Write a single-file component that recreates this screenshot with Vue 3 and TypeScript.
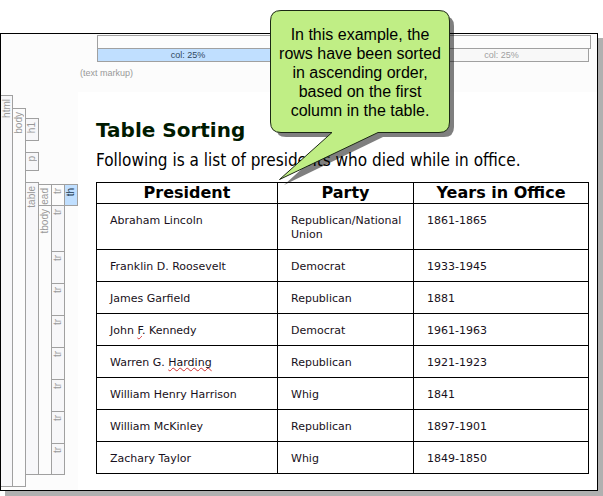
<script setup lang="ts">
interface President {
  before: string
  flagged?: string
  after?: string
  party: string
  years: string
}

const presidents: President[] = [
  { before: 'Abraham Lincoln', party: 'Republican/National Union', years: '1861-1865' },
  { before: 'Franklin D. Roosevelt', party: 'Democrat', years: '1933-1945' },
  { before: 'James Garfield', party: 'Republican', years: '1881' },
  { before: 'John ', flagged: 'F', after: '. Kennedy', party: 'Democrat', years: '1961-1963' },
  { before: 'Warren G. ', flagged: 'Harding', party: 'Republican', years: '1921-1923' },
  { before: 'William Henry Harrison', party: 'Whig', years: '1841' },
  { before: 'William McKinley', party: 'Republican', years: '1897-1901' },
  { before: 'Zachary Taylor', party: 'Whig', years: '1849-1850' },
]

const columns: string[] = ['President', 'Party', 'Years in Office']
</script>

<template>
  <div class="page">
    <main class="editor">
      <div class="ruler">
        <div class="ruler-table"></div>
        <div class="ruler-cols">
          <span class="ruler-col active">col: 25%</span>
          <span class="ruler-col"></span>
          <span class="ruler-col">col: 25%</span>
        </div>
      </div>
      <div class="markup-note">(text markup)</div>

      <div class="workspace">
        <div class="gutter">
          <div class="tag html-tag"><span class="label">html</span></div>
          <div class="tag body-tag"><span class="label">body</span></div>
          <div class="blocks">
            <div class="tag h1-tag"><span class="label">h1</span></div>
            <div class="tag p-tag"><span class="label">p</span></div>
            <div class="table-tags">
              <div class="tag table-tag"><span class="label">table</span></div>
              <div class="sections">
                <div class="section-row">
                  <div class="tag head"><span class="label">ead</span></div>
                  <div class="tag head"><span class="label">tr</span></div>
                  <div class="tag head selected"><span class="label">th</span></div>
                </div>
                <div class="section-row">
                  <div class="tag"><span class="label">tbody</span></div>
                  <div class="rows">
                    <div
                      v-for="(p, i) in presidents"
                      :key="p.years"
                      class="tag row-tag"
                      :class="{ tall: i === 0 }"
                    >
                      <span class="label">tr</span>
                    </div>
                  </div>
                </div>
              </div>
            </div>
          </div>
        </div>

        <article class="document">
          <h1>Table Sorting</h1>
          <p>Following is a list of presidents who died while in office.</p>
          <table>
            <colgroup>
              <col class="c-name" />
              <col class="c-party" />
              <col />
            </colgroup>
            <thead>
              <tr>
                <th v-for="c in columns" :key="c" scope="col">{{ c }}</th>
              </tr>
            </thead>
            <tbody>
              <tr v-for="p in presidents" :key="p.years">
                <td>{{ p.before }}<span v-if="p.flagged" class="misspelt">{{ p.flagged }}</span>{{ p.after }}</td>
                <td>{{ p.party }}</td>
                <td>{{ p.years }}</td>
              </tr>
            </tbody>
          </table>
        </article>
      </div>
    </main>

    <aside class="callout">
      <svg class="bubble" width="190" height="180" viewBox="0 0 190 180" aria-hidden="true">
        <path
          class="bubble-shadow"
          transform="translate(5 5)"
          d="M11 1H169Q179 1 179 11V112Q179 122 169 122H108L9 170L62 122H11Q1 122 1 112V11Q1 1 11 1Z"
        />
        <path
          class="bubble-face"
          d="M11 .5H169Q179.500 .5 179.500 11V112Q179.500 122.500 169 122.500H108L9.500 169.500L62 122.500H11Q.5 122.500 .5 112V11Q.5 .5 11 .5Z"
        />
      </svg>
      <p class="callout-text">
        In this example, the<br />rows have been sorted<br />in ascending order,<br />based on the first<br />column in the table.
      </p>
    </aside>
  </div>
</template>

<style>
body {
  margin: 0;
  background: #fff;
}
</style>

<style scoped>
.page {
  position: relative;
  padding: 33px 5px 5px 0;
  font-family: Verdana, "DejaVu Sans", sans-serif;
  color: #000;
}

.editor {
  border: 1px solid #000;
  background: #fcfcfc;
  box-shadow: 5px 5px 0 #b0b0b0;
}

.ruler {
  padding: 1px 6px 0 96px;
  font: 9px/12px "Liberation Sans", Arial, sans-serif;
  color: #a0a0a0;
}

.ruler-table {
  height: 12px;
  border: 1px solid #a0a0a0;
}

.ruler-cols {
  display: flex;
  margin-right: 2px;
  border-left: 1px solid #a0a0a0;
}

.ruler-col {
  box-sizing: border-box;
  flex: 1;
  height: 13px;
  border: 1px solid #a0a0a0;
  border-width: 0 1px 1px 0;
  background: #f8f8f8;
  text-align: center;
}

.ruler-col:nth-child(2) {
  flex: 0 0 136px;
}

.ruler-col.active {
  flex: 0 0 181px;
  background: #c0dfff;
  color: #304860;
}

.markup-note {
  padding: 5px 0 13px 79px;
  font: 9px/12px "Liberation Sans", Arial, sans-serif;
  color: #999;
}

.workspace {
  display: flex;
}

.gutter {
  display: flex;
  flex: 0 0 77px;
  padding: 3px 0;
  font: 10px/12px "Liberation Sans", Arial, sans-serif;
  color: #999;
}

.tag {
  box-sizing: border-box;
  width: 13px;
  flex: none;
  overflow: hidden;
  padding-top: 3px;
  border: 1px solid #a0a0a0;
  border-left: 0;
  background: #fcfcfc;
}

.label {
  display: block;
  width: 12px;
  writing-mode: vertical-rl;
  transform: rotate(180deg);
}

.html-tag {
  width: 12px;
  background: #f7f7f9;
}

.body-tag {
  margin-top: 13px;
}

.blocks {
  display: flex;
  flex-direction: column;
  padding: 23px 0 12px;
}

.h1-tag {
  height: 23px;
  background: #f7f7f9;
}

.p-tag {
  height: 19px;
  margin: 11px 0;
  background: #f7f7f9;
}

.table-tags {
  display: flex;
  flex: 1;
}

.table-tag {
  background: #f7f7f9;
}

.sections {
  display: flex;
  flex-direction: column;
  padding-top: 2px;
}

.section-row {
  display: flex;
}

.section-row + .section-row {
  flex: 1;
}

.head {
  height: 21px;
  border-bottom: 0;
}

.selected {
  height: 22px;
  margin-bottom: -1px;
  border-bottom: 1px solid #a0a0a0;
  background: #c0dfff;
  color: #203850;
}

.rows {
  display: flex;
  flex-direction: column;
}

.row-tag {
  height: 32px;
  border-bottom: 0;
  background: #f7f7f9;
}

.row-tag:last-child {
  flex: 1;
  border-bottom: 1px solid #a0a0a0;
}

.row-tag.tall {
  height: 46px;
}

.document {
  flex: 1;
  min-width: 0;
  padding: 25px 8px 16px 18px;
  background: #fff;
}

h1 {
  margin: 0;
  font-size: 20px;
  line-height: 26px;
  color: #001a00;
}

.document p {
  margin: 6px 0 11px;
  font-family: "DejaVu Sans Condensed", "DejaVu Sans", sans-serif;
  font-size: 17px;
  line-height: 22px;
  white-space: nowrap;
}

table {
  width: 100%;
  table-layout: fixed;
  border-collapse: collapse;
  border: 1px solid #000;
}

.c-name {
  width: 181px;
}

.c-party {
  width: 136px;
}

th {
  padding: 0;
  border: 1px solid #000;
  font-size: 16px;
  line-height: 20px;
}

td {
  padding: 10px 8px 7px 13px;
  border: 1px solid #000;
  font-size: 11px;
  line-height: 14px;
  vertical-align: top;
  color: #181020;
}

.misspelt {
  text-decoration: underline wavy #d03030 1px;
  text-underline-offset: 1px;
  text-decoration-skip-ink: none;
}

.callout {
  position: absolute;
  top: 10px;
  left: 270px;
  width: 180px;
}

.bubble {
  position: absolute;
  top: 0;
  left: 0;
}

.bubble-shadow {
  fill: rgba(0, 0, 0, 0.5);
}

.bubble-face {
  fill: #c0ee85;
  stroke: #1c2814;
}

.callout-text {
  position: relative;
  margin: 0;
  padding-top: 15px;
  font: 16px/19px "Liberation Sans", Arial, sans-serif;
  text-align: center;
  white-space: nowrap;
}
</style>
